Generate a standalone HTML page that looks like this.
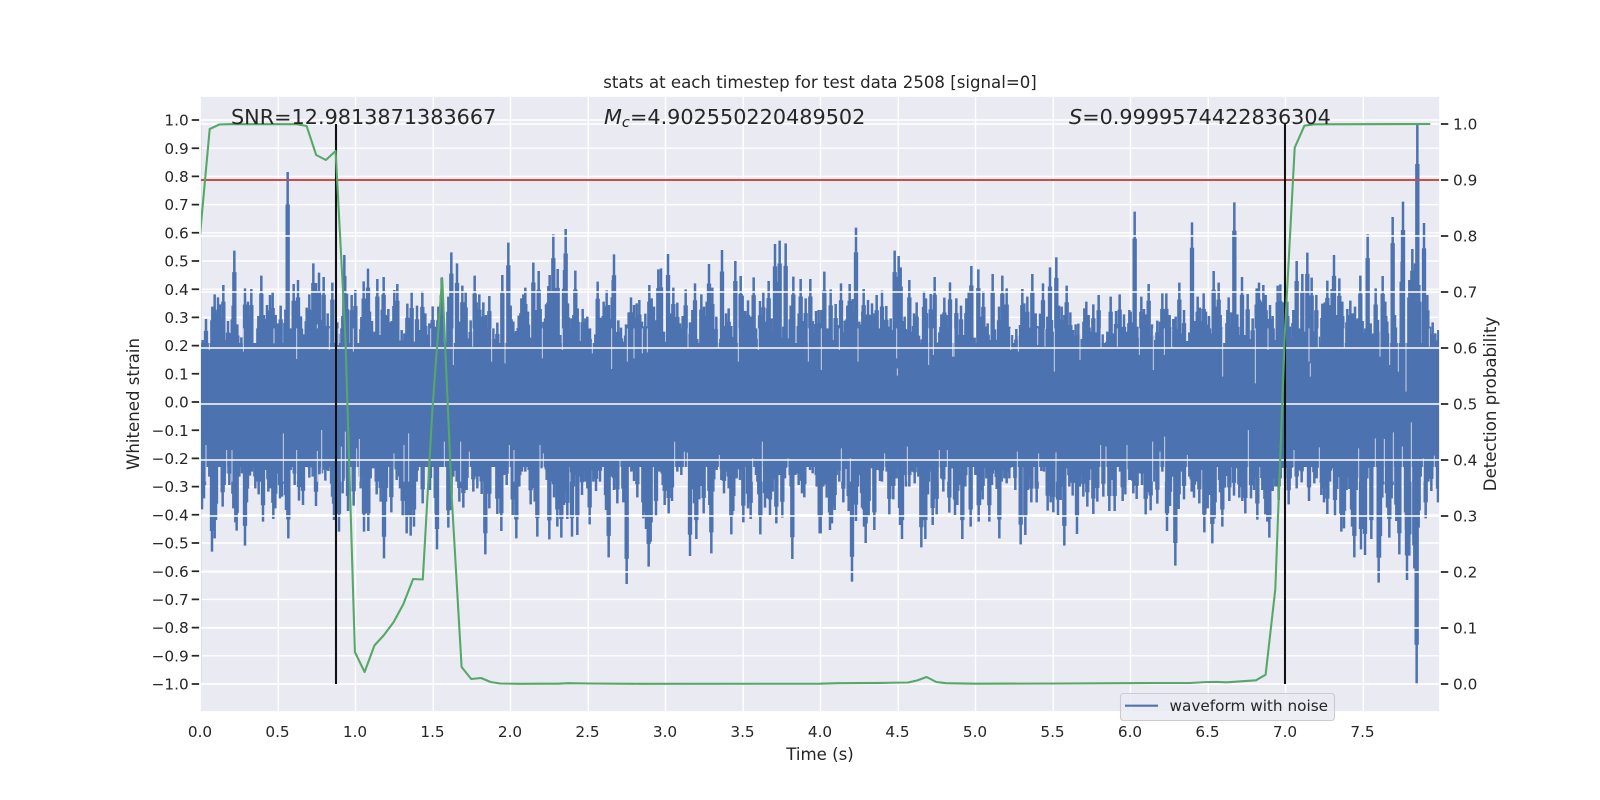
<!DOCTYPE html>
<html><head><meta charset="utf-8"><title>stats</title>
<style>html,body{margin:0;padding:0;background:#fff}svg{display:block}
text{font-family:"DejaVu Sans","Liberation Sans",sans-serif;fill:#262626}
.t{font-size:15.28px}.l{font-size:16.6px}.a{font-size:20.77px}</style></head><body>
<svg width="1600" height="800" viewBox="0 0 1600 800" xmlns="http://www.w3.org/2000/svg">
<defs><clipPath id="c"><rect x="200" y="96" width="1240" height="616"/></clipPath>
<g id="w">
<path transform="translate(200 215) scale(.33333)" d="M8 375V570M18 312V570M37 275V570M44 238V570M54 247V570M60 268V570M70 210V570M78 375V570M84 318V570M92 355V570M103 107V570M98 272V570M112 328V570M124 367V570M135 220V570M144 260V570M154 222V570M164 390V570M175 303V570M184 182V570M192 300V570M201 270V570M210 240V570M218 232V570M227 300V570M233 325V570M242 272V570M256 284V570M263 -129V570M272 340V570M281 207V570M294 195V570M303 304V570M312 358V570M320 278V570M328 238V570M340 145V570M348 204V570M357 173V570M363 315V570M371 186V570M383 295V570M397 203V570M412 322V570M427 303V570M433 120V570M441 236V570M455 240V570M466 225V570M484 306V570M491 199V570M497 308V570M504 161V570M510 290V570M516 318V570M524 350V570M532 192V570M540 360V570M548 238V570M551 186V570M559 300V570M565 282V570M575 318V570M583 225V570M592 207V570M605 345V570M613 355V570M622 266V570M630 310V570M635 232V570M642 380V570M651 272V570M660 345V570M667 228V570M676 295V570M688 325V570M698 274V570M707 335V570M715 275V570M725 188V570M735 380V570M745 245V570M754 112V570M771 145V570M778 320V570M787 212V570M797 230V570M805 370V570M812 316V570M824 182V570M830 262V570M838 238V570M850 262V570M858 300V570M868 243V570M880 340V570M892 323V570M907 180V570M925 83V570
M6 883V570M12 850V570M28 785V570M36 1010V570M44 970V570M48 915V570M60 745V570M68 875V570M74 810V570M88 810V570M100 880V570M106 922V570M110 947V570M118 785V570M126 775V570M135 992V570M141 862V570M150 782V570M156 770V570M166 820V570M176 838V570M182 800V570M189 920V570M196 765V570M205 830V570M212 820V570M220 912V570M226 880V570M236 775V570M240 850V570M246 845V570M258 885V570M265 970V570M272 765V570M284 810V570M297 857V570M303 810V570M309 870V570M318 755V570M328 788V570M338 785V570M348 873V570M358 778V570M366 775V570M376 797V570M385 768V570M396 845V570M402 915V570M417 950V570M428 835V570M436 790V570M444 888V570M452 735V570M461 872V570M482 820V570M492 950V570M498 790V570M505 948V570M512 790V570M520 760V570M530 838V570M536 745V570M542 860V570M552 1030V570M558 860V570M568 735V570M574 892V570M590 795V570M600 820V570M608 905V570M620 955V570M632 962V570M642 935V570M650 800V570M658 745V570M668 865V570M676 755V570M690 825V570M698 745V570M707 895V570M711 1003V570M720 745V570M745 938V570M752 885V570M760 785V570M770 800V570M778 860V570M790 878V570M800 825V570M820 830V570M832 820V570M845 837V570M856 1018V570M862 740V570M868 880V570M880 750V570M892 897V570M904 948V570M912 780V570M920 810V570"/>
<path transform="translate(510 215) scale(.33333)" d="M2 272V570M10 320V570M18 348V570M26 302V570M34 250V570M40 238V570M46 218V570M54 290V570M62 368V570M70 143V570M78 285V570M86 168V570M92 282V570M102 320V570M108 268V570M115 213V570M119 180V570M130 58V570M136 330V570M143 162V570M151 360V570M167 42V570M162 165V570M174 265V570M184 310V570M190 300V570M196 167V570M203 280V570M210 378V570M218 282V570M226 310V570M232 305V570M240 340V570M256 358V570M263 200V570M272 308V570M281 260V570M290 226V570M297 270V570M312 118V570M308 195V570M325 316V570M333 338V570M340 380V570M348 328V570M356 292V570M363 247V570M372 270V570M380 265V570M388 255V570M396 320V570M406 296V570M418 210V570M425 250V570M432 275V570M445 163V570M453 160V570M462 350V570M474 117V570M482 295V570M490 218V570M496 330V570M502 263V570M510 325V570M518 303V570M527 223V570M540 322V570M547 285V570M555 205V570M562 372V570M574 238V570M582 275V570M590 260V570M597 147V570M607 218V570M619 305V570M634 340V570M636 105V570M648 295V570M656 280V570M664 333V570M676 138V570M692 183V570M698 242V570M706 288V570M714 256V570M722 305V570M731 187V570M738 340V570M750 258V570M760 230V570M772 280V570M776 198V570M785 310V570M795 87V570M802 200V570M809 77V570M820 335V570M827 85V570M835 370V570M842 272V570M850 185V570M858 385V570M866 295V570M872 192V570M880 318V570M887 250V570M901 192V570M908 318V570M918 288V570M926 285V570
M8 900V570M19 970V570M28 815V570M36 770V570M46 770V570M56 765V570M62 868V570M70 760V570M74 860V570M82 965V570M94 760V570M110 795V570M118 973V570M126 800V570M132 847V570M142 935V570M148 880V570M154 968V570M162 870V570M172 912V570M186 965V570M192 815V570M202 960V570M210 785V570M216 840V570M226 800V570M232 820V570M239 928V570M250 800V570M258 828V570M270 800V570M280 750V570M288 885V570M296 1027V570M305 785V570M312 825V570M322 865V570M340 862V570M350 1107V570M358 745V570M364 770V570M372 798V570M382 847V570M390 745V570M400 910V570M408 942V570M416 1055V570M422 980V570M428 740V570M438 905V570M448 770V570M458 810V570M464 870V570M476 895V570M486 858V570M502 770V570M514 780V570M540 1023V570M546 810V570M552 865V570M559 972V570M568 853V570M575 750V570M581 895V570M592 755V570M598 870V570M604 1015V570M610 830V570M620 765V570M634 795V570M642 835V570M650 770V570M656 820V570M664 958V570M670 888V570M680 790V570M690 795V570M700 922V570M706 745V570M714 880V570M722 912V570M738 780V570M745 838V570M751 958V570M765 878V570M772 850V570M780 900V570M788 830V570M799 925V570M808 780V570M817 908V570M825 790V570M842 815V570M847 1032V570M856 780V570M866 810V570M876 835V570M883 847V570M890 745V570M900 765V570M908 775V570M920 815V570M929 955V570"/>
<path transform="translate(820 215) scale(.33333)" d="M4 285V570M13 170V570M20 340V570M26 340V570M32 223V570M38 375V570M47 267V570M55 330V570M63 205V570M70 378V570M74 317V570M82 272V570M89 207V570M98 252V570M108 38V570M118 320V570M127 290V570M131 222V570M138 320V570M144 255V570M150 300V570M156 265V570M163 295V570M170 240V570M178 340V570M186 227V570M192 375V570M199 273V570M207 335V570M212 310V570M218 345V570M224 107V570M236 123V570M242 157V570M247 318V570M254 305V570M262 345V570M268 195V570M275 350V570M282 295V570M290 262V570M297 362V570M305 373V570M312 228V570M318 250V570M332 237V570M344 186V570M351 385V570M358 352V570M364 298V570M373 248V570M380 300V570M390 202V570M409 250V570M416 360V570M423 272V570M432 360V570M439 250V570M446 230V570M454 153V570M464 368V570M475 163V570M482 305V570M490 228V570M496 335V570M503 325V570M511 375V570M518 177V570M525 343V570M537 275V570M547 182V570M553 362V570M560 220V570M568 335V570M576 360V570M589 342V570M600 330V570M607 222V570M613 265V570M622 245V570M630 338V570M637 177V570M647 295V570M660 296V570M669 205V570M682 305V570M690 157V570M696 315V570M709 127V570M717 272V570M725 275V570M733 300V570M740 212V570M751 292V570M759 345V570M767 328V570M775 326V570M785 372V570M793 280V570M799 260V570M806 300V570M812 350V570M820 268V570M828 352V570M836 240V570M848 358V570M862 350V570M872 245V570M879 355V570M888 288V570M899 238V570M906 347V570M912 298V570M919 350V570M928 285V570
M2 955V570M10 815V570M20 848V570M30 945V570M36 925V570M44 885V570M50 780V570M58 800V570M70 862V570M78 762V570M86 888V570M96 1100V570M103 832V570M108 918V570M114 815V570M126 878V570M132 935V570M137 984V570M146 905V570M156 760V570M163 945V570M170 765V570M180 798V570M186 800V570M200 770V570M208 898V570M214 800V570M220 853V570M230 790V570M240 930V570M246 972V570M254 738V570M258 815V570M268 815V570M276 770V570M284 805V570M295 785V570M304 997V570M310 812V570M316 972V570M324 838V570M330 770V570M338 930V570M344 745V570M350 898V570M364 790V570M370 830V570M388 893V570M396 760V570M405 900V570M412 870V570M418 810V570M427 972V570M436 815V570M444 745V570M452 935V570M460 755V570M466 780V570M476 920V570M480 870V570M488 853V570M494 735V570M499 790V570M508 920V570M516 810V570M522 765V570M530 822V570M538 970V570M545 800V570M553 790V570M560 805V570M568 790V570M576 730V570M586 825V570M602 988V570M608 755V570M616 960V570M624 825V570M634 862V570M640 755V570M650 862V570M664 768V570M672 770V570M683 887V570M692 862V570M700 892V570M714 900V570M722 855V570M733 992V570M740 760V570M748 815V570M758 842V570M764 740V570M771 957V570M780 815V570M790 845V570M802 875V570M808 795V570M820 897V570M826 762V570M832 860V570M850 845V570M868 888V570M876 795V570M884 888V570M892 750V570M900 770V570M908 858V570M916 838V570M928 795V570"/>
<path transform="translate(1130 215) scale(.33333)" d="M2 290V570M8 322V570M14 -10V570M22 335V570M34 245V570M42 282V570M49 298V570M56 207V570M66 328V570M74 375V570M82 317V570M90 320V570M97 235V570M109 235V570M119 300V570M130 312V570M137 305V570M148 203V570M155 355V570M162 285V570M172 378V570M178 352V570M186 22V570M195 318V570M203 245V570M210 278V570M214 330V570M221 235V570M228 290V570M237 303V570M243 355V570M251 168V570M257 275V570M266 203V570M272 300V570M284 388V570M292 285V570M296 247V570M306 292V570M313 -38V570M322 298V570M330 360V570M336 186V570M344 360V570M353 237V570M360 372V570M368 310V570M380 220V570M387 203V570M393 335V570M400 210V570M407 240V570M415 350V570M420 270V570M428 303V570M436 375V570M443 212V570M451 208V570M458 262V570M472 260V570M480 335V570M490 285V570M500 138V570M508 340V570M517 177V570M526 350V570M532 113V570M545 188V570M552 350V570M559 240V570M567 365V570M577 266V570M584 262V570M592 197V570M597 325V570M605 222V570M612 120V570M620 300V570M628 190V570M637 260V570M652 282V570M661 257V570M668 295V570M675 275V570M683 310V570M691 182V570M698 318V570M706 340V570M713 58V570M722 325V570M730 355V570M737 220V570M744 315V570M758 183V570M766 260V570M772 320V570M788 6V570M795 300V570M815 140V570M819 -40V570M838 195V570M847 102V570M855 145V570M862 -270V570M868 210V570M882 24V570M892 240V570M900 335V570M908 322V570M916 355V570M925 345V570
M3 795V570M10 835V570M20 852V570M28 775V570M36 810V570M47 898V570M55 832V570M62 886V570M72 800V570M82 866V570M97 770V570M111 948V570M120 873V570M129 785V570M136 1052V570M146 882V570M154 770V570M162 853V570M178 785V570M185 830V570M192 848V570M200 800V570M208 865V570M214 765V570M223 952V570M233 880V570M240 840V570M247 985V570M254 910V570M262 755V570M270 832V570M277 935V570M285 818V570M291 745V570M298 858V570M305 755V570M312 842V570M322 760V570M328 848V570M337 858V570M346 895V570M363 850V570M372 825V570M382 914V570M388 735V570M397 825V570M406 898V570M412 920V570M418 968V570M428 828V570M436 815V570M446 855V570M452 790V570M465 790V570M476 868V570M482 790V570M500 820V570M507 765V570M515 802V570M523 718V570M530 735V570M537 858V570M546 740V570M553 805V570M560 790V570M574 840V570M582 862V570M592 897V570M600 800V570M606 760V570M615 902V570M622 822V570M634 950V570M642 940V570M650 825V570M658 822V570M666 935V570M673 1027V570M680 825V570M693 1003V570M699 930V570M705 1020V570M712 790V570M724 972V570M746 1103V570M750 1028V570M757 848V570M771 878V570M778 968V570M785 850V570M799 918V570M808 1018V570M828 945V570M831 1095V570M838 1022V570M853 1060V570M858 1140V570M860 1407V570M866 938V570M872 785V570M887 910V570M895 800V570M904 828V570M924 862V570"/>
</g></defs>
<rect x="200" y="96" width="1240" height="616" fill="#eaeaf2"/>
<g clip-path="url(#c)">
<path fill="none" stroke="#fff" stroke-width="1.39" d="M200 120H1440M200 148.2H1440M200 176.4H1440M200 204.6H1440M200 232.8H1440M200 261H1440M200 289.2H1440M200 317.4H1440M200 345.6H1440M200 373.8H1440M200 402H1440M200 430.2H1440M200 458.4H1440M200 486.6H1440M200 514.8H1440M200 543H1440M200 571.2H1440M200 599.4H1440M200 627.6H1440M200 655.8H1440M200 684H1440M278.2 96V712M355.5 96V712M433.2 96V712M510.5 96V712M588.2 96V712M665.5 96V712M743.2 96V712M820.5 96V712M898.2 96V712M975.5 96V712M1053.2 96V712M1130.5 96V712M1208.2 96V712M1285.5 96V712M1363.2 96V712"/>
<path fill="none" stroke="#dcdce6" stroke-width="1" d="M201.4 124V684"/>
<rect x="201" y="343" width="1239" height="124" fill="#4c72b0"/>
<g fill="none" stroke="#4c72b0">
<g stroke-width="13" transform="translate(0 404) scale(1 .86) translate(0 -404)"><use href="#w"/></g>
<g stroke-width="7.5"><use href="#w"/></g>
</g>
<g fill="none" stroke="#eaeaf2" stroke-width="3" opacity=".8">
<path transform="translate(200 215) scale(.33333)" d="M28 405V340M130 410V340M290 432V340M222 385V340M352 328V340M415 390V340M460 410V340M388 405V340M760 450V340M875 440V340M915 445V340M692 395V340M818 395V340M18 690V800M80 705V800M96 705V800M250 655V800M290 705V800M365 645V800M352 708V800M424 695V800M436 650V800M470 700V800M478 672V800M582 715V800M612 690V800M626 655V800M733 680V800M782 680V800M808 710V800M928 690V800"/>
<path transform="translate(510 215) scale(.33333)" d="M97 430V340M157 405V340M247 415V340M305 462V340M352 440V340M372 430V340M397 415V340M412 412V340M534 400V340M625 398V340M685 440V340M745 405V340M895 440V340M12 705V800M90 690V800M100 715V800M180 772V800M330 735V800M494 680V800M523 710V800M532 713V800M628 720V800M728 730V800M757 680V800M834 730V800"/>
<path transform="translate(820 215) scale(.33333)" d="M4 465V340M58 405V340M114 440V340M230 430V340M232 482V460M326 450V340M340 420V340M398 425V340M402 425V340M572 405V340M595 410V340M653 390V340M675 395V340M703 470V340M780 435V340M843 400V340M892 395V340M64 700V800M194 715V800M262 695V800M358 705V800M382 705V800M592 710V800M656 715V800M708 712V800M842 690V800M858 695V800M921 690V800M91 730V800"/>
<path transform="translate(1130 215) scale(.33333)" d="M28 420V340M70 465V340M103 420V340M125 400V340M278 485V340M376 505V340M414 405V340M537 440V340M541 485V445M565 400V340M643 400V340M750 425V340M779 450V340M805 470V340M828 530V340M898 395V340M68 680V800M90 710V800M104 665V800M172 720V800M355 645V800M492 705V800M568 697V800M686 700V800M736 670V800M763 672V800M790 652V800M817 695V800M844 622V800M880 730V800M913 722V800"/>
</g>
<path fill="none" stroke="#fff" stroke-width="1.39" d="M200 124H1440M200 180H1440M200 236H1440M200 292H1440M200 348H1440M200 404H1440M200 460H1440M200 516H1440M200 572H1440M200 628H1440M200 684H1440"/>
<path fill="none" stroke="#c44e52" stroke-width="2.08" d="M200 180H1440"/>
<path fill="none" stroke="#111" stroke-width="2.08" d="M336 124V684M1285 124V684"/>
<polyline fill="none" stroke="#55a868" stroke-width="2.08" stroke-linejoin="round" points="200,235 209.7,129 219.4,124.5 229,124.2 296.9,124.2 306.6,126 316.2,155 325.9,160 335.6,151 345.3,335 354.9,652 364.6,672 374.4,645.5 384,635 393.7,622 403.4,604 413.1,579 422.8,579.5 432.5,408 442.2,278 451.9,500 461.6,667 471.2,679 481,678 490.6,682 500.3,683.5 520,683.8 540,683.7 558,683.7 568,683.2 590,683.5 640,683.8 820,683.7 838,683.2 880,682.9 908,682.5 917,680.5 926.6,677 936.3,682 946,683.2 975,683.7 1060,683.5 1150,683 1190,683 1206.7,682 1217,681.9 1226.7,682.3 1255.9,680.3 1265.6,674.7 1275.3,589.3 1285,330 1294.7,147.7 1304.4,125.7 1314,124.3 1430.3,124"/>
</g>
<path fill="none" stroke="#262626" stroke-width="1.74" d="M191.7 120H200M191.7 148.2H200M191.7 176.4H200M191.7 204.6H200M191.7 232.8H200M191.7 261H200M191.7 289.2H200M191.7 317.4H200M191.7 345.6H200M191.7 373.8H200M191.7 402H200M191.7 430.2H200M191.7 458.4H200M191.7 486.6H200M191.7 514.8H200M191.7 543H200M191.7 571.2H200M191.7 599.4H200M191.7 627.6H200M191.7 655.8H200M191.7 684H200M1440 124H1448.3M1440 180H1448.3M1440 236H1448.3M1440 292H1448.3M1440 348H1448.3M1440 404H1448.3M1440 460H1448.3M1440 516H1448.3M1440 572H1448.3M1440 628H1448.3M1440 684H1448.3"/>
<rect x="200" y="96" width="1240" height="616" fill="none" stroke="#fff" stroke-width="1.74"/>
<g class="t" text-anchor="end">
<text x="188.7" y="125.6">1.0</text><text x="188.7" y="153.8">0.9</text><text x="188.7" y="182">0.8</text><text x="188.7" y="210.2">0.7</text><text x="188.7" y="238.4">0.6</text><text x="188.7" y="266.6">0.5</text><text x="188.7" y="294.8">0.4</text><text x="188.7" y="323">0.3</text><text x="188.7" y="351.2">0.2</text><text x="188.7" y="379.4">0.1</text><text x="188.7" y="407.6">0.0</text><text x="188.7" y="435.8">−0.1</text><text x="188.7" y="464">−0.2</text><text x="188.7" y="492.2">−0.3</text><text x="188.7" y="520.4">−0.4</text><text x="188.7" y="548.6">−0.5</text><text x="188.7" y="576.8">−0.6</text><text x="188.7" y="605">−0.7</text><text x="188.7" y="633.2">−0.8</text><text x="188.7" y="661.4">−0.9</text><text x="188.7" y="689.6">−1.0</text>
</g>
<g class="t">
<text x="1453" y="129.6">1.0</text><text x="1453" y="185.6">0.9</text><text x="1453" y="241.6">0.8</text><text x="1453" y="297.6">0.7</text><text x="1453" y="353.6">0.6</text><text x="1453" y="409.6">0.5</text><text x="1453" y="465.6">0.4</text><text x="1453" y="521.6">0.3</text><text x="1453" y="577.6">0.2</text><text x="1453" y="633.6">0.1</text><text x="1453" y="689.6">0.0</text>
</g>
<g class="t" text-anchor="middle">
<text x="200" y="737">0.0</text><text x="277.5" y="737">0.5</text><text x="355" y="737">1.0</text><text x="432.5" y="737">1.5</text><text x="510" y="737">2.0</text><text x="587.5" y="737">2.5</text><text x="665" y="737">3.0</text><text x="742.5" y="737">3.5</text><text x="820" y="737">4.0</text><text x="897.5" y="737">4.5</text><text x="975" y="737">5.0</text><text x="1052.5" y="737">5.5</text><text x="1130" y="737">6.0</text><text x="1207.5" y="737">6.5</text><text x="1285" y="737">7.0</text><text x="1362.5" y="737">7.5</text>
</g>
<text class="l" x="820" y="88" text-anchor="middle">stats at each timestep for test data 2508 [signal=0]</text>
<text class="l" x="820" y="760" text-anchor="middle">Time (s)</text>
<text class="l" text-anchor="middle" transform="translate(139 404) rotate(-90)">Whitened strain</text>
<text class="l" text-anchor="middle" transform="translate(1496 404) rotate(-90)">Detection probability</text>
<text class="a" x="231" y="124">SNR=12.9813871383667</text>
<text class="a" x="604" y="124"><tspan font-style="italic">M</tspan><tspan font-style="italic" font-size="14.6" dy="3.2">c</tspan><tspan dy="-3.2">=4.902550220489502</tspan></text>
<text class="a" x="1069" y="124"><tspan font-style="italic">S</tspan>=0.9999574422836304</text>
<rect x="1120.5" y="693.5" width="214" height="27" rx="3" fill="#eaeaf2" fill-opacity=".8" stroke="#ccc" stroke-width="1.1"/>
<path stroke="#4c72b0" stroke-width="2.08" d="M1125 705.7H1158"/>
<text class="t" x="1169.5" y="711">waveform with noise</text>
</svg>
</body></html>
